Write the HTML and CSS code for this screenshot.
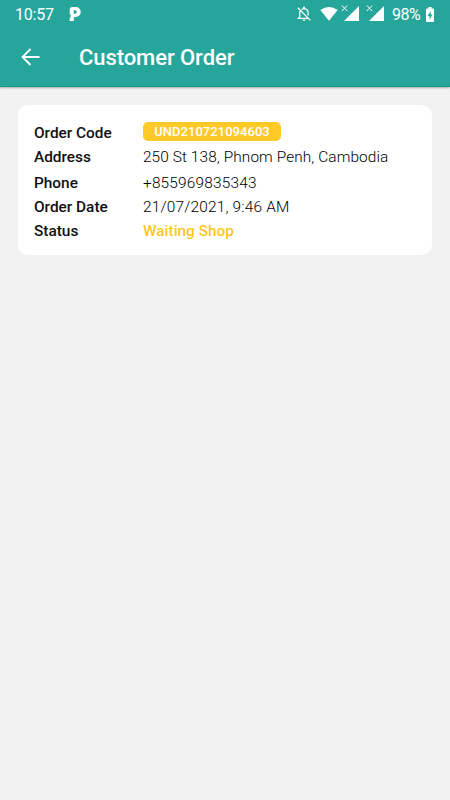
FILE: index.html
```html
<!DOCTYPE html>
<html lang="en">
<head>
<meta charset="utf-8">
<title>Customer Order</title>
<link rel="stylesheet" href="styles.css">
</head>
<body>
<header class="header">
  <div class="status-bar">
    <span class="clock">10:57</span>
    <svg class="app-icon" width="12" height="14" viewBox="0 0 12 14"><path fill="#fff" fill-rule="evenodd" d="M3 0H6.800A4.900 4.900 0 0 1 6.800 9.900H5.500Q4.800 10.200 4.800 11.200V13.900H.7V10.500H1.700V7.500H.7V2.500Q.7 0 3 0zM4.700 3.300V6.800Q5.200 6.400 6.200 6.400Q7.800 6.400 7.800 4.900T6.200 3.300z"/></svg>
    <div class="system-icons">
      <svg class="bell" width="14" height="16" viewBox="0 0 14 16" fill="none" stroke="#fff" stroke-width="1.25"><path d="M.8 1.8l12.6 12.6M2.8 5.1V11L1.4 12.4H11.3M4.5 3.5Q5.6 2.7 7 2.7 11 2.9 11.1 7V9.6"/><path fill="#fff" stroke="none" d="M6 .7h2v2H6zM5.5 13.6h3Q8.3 15 7 15T5.5 13.6z"/></svg>
      <svg class="wifi" width="18" height="14" viewBox="0 0 18 14"><path fill="#fff" d="M.3 3Q9-2.9 17.7 3L9 13.800z"/></svg>
      <svg class="signal" width="19" height="17" viewBox="0 0 19 17"><path fill="#fff" d="M18 2v15H3z"/><path stroke="#fff" stroke-width="1" d="M.8 1.500l5.400 5.500M6.200 1.500l-5.400 5.500"/></svg>
      <svg class="signal second" width="19" height="17" viewBox="0 0 19 17"><path fill="#fff" d="M18 2v15H3z"/><path stroke="#fff" stroke-width="1" d="M.8 1.500l5.400 5.500M6.200 1.500l-5.400 5.500"/></svg>
      <span class="percent">98%</span>
      <svg class="battery" width="8" height="15" viewBox="0 0 8 15"><path fill="#fff" d="M2.4 0h3.2v1.5H7q1 0 1 1V14q0 1-1 1H1q-1 0-1-1V2.500q0-1 1-1h1.400z"/><path fill="#26a69a" d="M4.600 4L1.500 9H3.500V12.700L6.500 7.500H4.600z"/></svg>
    </div>
  </div>
  <div class="toolbar">
    <svg class="back" width="19" height="18" viewBox="0 0 19 18" fill="none" stroke="#fff" stroke-width="1.8"><path d="M18.500 9H2M9.500 1L1.500 9l8 8"/></svg>
    <h1>Customer Order</h1>
  </div>
</header>
<main class="card">
  <div class="row code-row"><span class="label">Order Code</span><span class="badge">UND210721094603</span></div>
  <div class="row address"><span class="label">Address</span><span class="value">250 St 138, Phnom Penh, Cambodia</span></div>
  <div class="row phone"><span class="label">Phone</span><span class="value">+855969835343</span></div>
  <div class="row date"><span class="label">Order Date</span><span class="value date-value">21/07/2021, 9:46 AM</span></div>
  <div class="row status"><span class="label">Status</span><span class="waiting">Waiting Shop</span></div>
</main>
</body>
</html>
```
FILE: styles.css
```css
* { box-sizing: border-box; }
body { margin: 0; min-height: 800px; background: #f2f2f2; font-family: Roboto, sans-serif; color: #111; }
svg { display: block; flex: none; }
.header { height: 87px; background: #26a69a; color: #fff; box-shadow: 0 1px 2px rgba(0,0,0,.3); border-bottom: 1px solid #109b8d; }
.status-bar { height: 28px; display: flex; align-items: center; padding: 0 16px 0 15px; font-size: 16px; }
.clock { width: 54px; white-space: nowrap; letter-spacing: -.2px; }
.system-icons { display: flex; align-items: center; margin-left: auto; }
.wifi { margin-left: 9px; }
.signal { margin: -3px 0 0 3px; }
.signal.second { margin-left: 6px; }
.percent { width: 34px; margin-left: 7px; white-space: nowrap; letter-spacing: -.5px; }
.toolbar { height: 58px; display: flex; align-items: center; padding-left: 21px; }
h1 { margin: 2px 0 0 39px; font-size: 22px; line-height: 28px; font-weight: 500; letter-spacing: -.07px; }
.card { width: 414.600px; height: 150px; margin: 18px 0 0 17.600px; padding: 15px 16.400px; border-radius: 10px; background: #fff; }
.row { height: 24.500px; display: grid; grid-template-columns: 109px 1fr; align-items: center; font-size: 15.400px; line-height: 20px; white-space: nowrap; }
.code-row .label { padding-top: 1px; }
.phone { height: 25px; padding-top: 2px; }
.date { height: 24px; padding-top: 1px; }
.status { padding-top: 1px; }
.label, .waiting { font-weight: 500; }
.value { font-weight: 300; letter-spacing: .1px; color: #000; }
.phone .value { letter-spacing: .2px; }
.date-value { letter-spacing: .2px; }
.waiting { color: #ffc71f; }
.badge { width: 138px; height: 19px; margin-top: -1px; border-radius: 5px; background: #ffca28; color: #fff; text-align: center; font-size: 13px; line-height: 19px; font-weight: 500; letter-spacing: .05px; }
```
